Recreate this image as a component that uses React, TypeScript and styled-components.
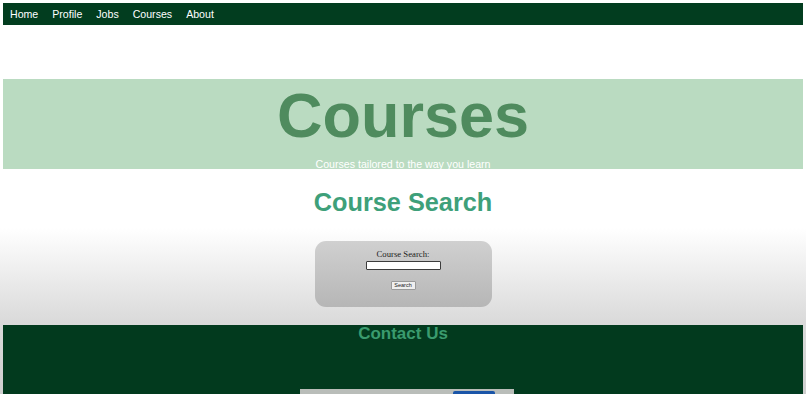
import React from "react";
import styled, { createGlobalStyle } from "styled-components";

const GlobalStyle = createGlobalStyle`
  html, body {
    margin: 0;
    padding: 0;
  }
  body {
    min-height: 394px;
    font-family: "Liberation Sans", Arial, sans-serif;
    background: linear-gradient(to bottom, #ffffff 0, #ffffff 228px, #dadada 322px, #cfcfcf 394px);
  }
`;

const Page = styled.div`
  display: flex;
  flex-direction: column;
  padding: 3px 3px 0;
  min-height: 391px;
  box-sizing: border-box;
`;

const NavBar = styled.nav`
  display: flex;
  align-items: center;
  height: 22px;
  background: #023d1f;
`;

const NavLink = styled.a`
  color: #ffffff;
  font-size: 10.6px;
  padding: 0 7px;
  text-decoration: none;
  cursor: pointer;
`;

const Hero = styled.header`
  display: flex;
  flex-direction: column;
  align-items: center;
  height: 90px;
  margin-top: 54px;
  padding-top: 4px;
  box-sizing: border-box;
  background: #badbc1;
`;

const HeroTitle = styled.h1`
  margin: 0;
  font-size: 63px;
  line-height: 64px;
  font-weight: 700;
  color: #4f8b5e;
`;

const HeroSubtitle = styled.p`
  margin: 11px 0 0;
  font-size: 10.6px;
  line-height: 13px;
  color: #ffffff;
`;

const SearchSection = styled.section`
  display: flex;
  flex-direction: column;
  align-items: center;
`;

const SectionTitle = styled.h2`
  margin: 19px 0 0;
  font-size: 25.3px;
  line-height: 29px;
  font-weight: 700;
  color: #3ea07a;
`;

const SearchCard = styled.form`
  display: flex;
  flex-direction: column;
  align-items: center;
  width: 177px;
  height: 66px;
  margin-top: 24px;
  padding-top: 8px;
  box-sizing: border-box;
  border-radius: 11px;
  background: linear-gradient(to bottom, #d0d0d0, #b6b6b6);
`;

const SearchLabel = styled.label`
  font-family: "Liberation Serif", "Times New Roman", serif;
  font-size: 8.7px;
  line-height: 10px;
  color: #222222;
`;

const SearchInput = styled.input`
  width: 75px;
  height: 9px;
  margin: 2px 0 0;
  padding: 0;
  box-sizing: border-box;
  border: 1.5px solid #3c3c3c;
  border-radius: 1px;
  background: #ffffff;
`;

const SearchButton = styled.button`
  margin-top: 11px;
  width: 25px;
  height: 9px;
  padding: 0;
  font-family: "Liberation Sans", Arial, sans-serif;
  font-size: 5.5px;
  line-height: 7px;
  color: #222222;
  background: #efefef;
  border: 1px solid #9a9a9a;
  border-radius: 1px;
`;

const Footer = styled.footer`
  display: flex;
  flex-direction: column;
  align-items: center;
  flex: 1;
  margin-top: 18px;
  background: #023a1e;
  overflow: hidden;
`;

const FooterTitle = styled.h2`
  margin: 0;
  font-size: 17px;
  line-height: 18px;
  font-weight: 700;
  color: #3a9b6e;
`;

const ContactForm = styled.div`
  display: flex;
  justify-content: flex-end;
  width: 214px;
  height: 20px;
  margin: 46px 0 0 8px;
  padding-right: 19px;
  box-sizing: border-box;
  background: #b9bdb9;
`;

const ContactButton = styled.div`
  width: 42px;
  margin-top: 2px;
  border-radius: 2px 2px 0 0;
  background: #1a55a8;
`;

const links = ["Home", "Profile", "Jobs", "Courses", "About"];

export default function App() {
  return (
    <>
      <GlobalStyle />
      <Page>
        <NavBar>
          {links.map(l => (
            <NavLink key={l}>{l}</NavLink>
          ))}
        </NavBar>
        <Hero>
          <HeroTitle>Courses</HeroTitle>
          <HeroSubtitle>Courses tailored to the way you learn</HeroSubtitle>
        </Hero>
        <SearchSection>
          <SectionTitle>Course Search</SectionTitle>
          <SearchCard onSubmit={e => e.preventDefault()}>
            <SearchLabel htmlFor="course-search">Course Search:</SearchLabel>
            <SearchInput id="course-search" type="text" />
            <SearchButton type="submit">Search</SearchButton>
          </SearchCard>
        </SearchSection>
        <Footer>
          <FooterTitle>Contact Us</FooterTitle>
          <ContactForm>
            <ContactButton />
          </ContactForm>
        </Footer>
      </Page>
    </>
  );
}
